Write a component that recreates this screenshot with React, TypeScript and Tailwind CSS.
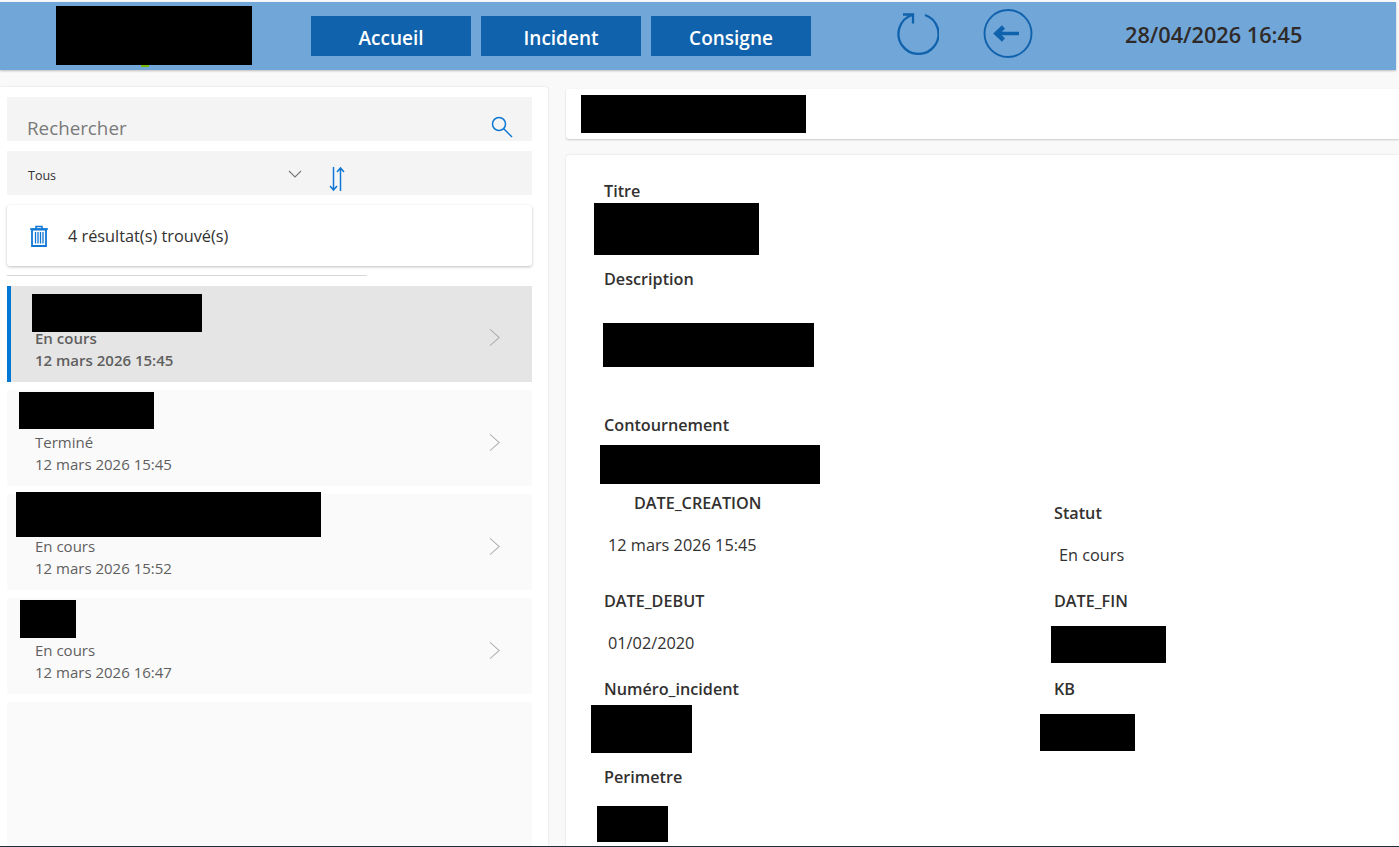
const font = "font-['Open_Sans',sans-serif]";

const Redacted = ({className}: {className: string}) => (
  <div className={`bg-black ${className}`} />
);

const NavButton = ({label}: {label: string}) => (
  <button className="w-40 h-10 bg-[#1062ac] text-white text-[19px] font-semibold flex items-center justify-center pt-1">
    {label}
  </button>
);

const Chevron = ({className}: {className: string}) => (
  <svg viewBox="0 0 12 20" className={className} fill="none" stroke="#a6a6a6" strokeWidth="1.1">
    <path d="M1 1l10 9-10 9" />
  </svg>
);

const rows = [
  {status: 'Terminé', date: '12 mars 2026 15:45', redact: 'w-[135px] h-[37px] -ml-[16px] mt-[2px] mb-[2px]'},
  {status: 'En cours', date: '12 mars 2026 15:52', redact: 'w-[305px] h-[45px] -ml-[19px] -mt-[2px] -mb-[2px]'},
  {status: 'En cours', date: '12 mars 2026 16:47', redact: 'w-[56px] h-[38px] -ml-[15px] mt-[2px] mb-[1px]'},
];

const Label = ({children, className = ''}: {children: string; className?: string}) => (
  <div className={`text-[16.2px] leading-[22px] font-semibold text-[#323130] ${className}`}>{children}</div>
);

const Value = ({children, className = ''}: {children: string; className?: string}) => (
  <div className={`text-[16.3px] leading-[22px] text-[#323130] ${className}`}>{children}</div>
);

export default function App() {
  return (
    <div className={`${font} relative w-[1399px] h-[847px] overflow-hidden bg-[#f9f9f9] flex flex-col`}>
      <header className="mt-[2px] w-[1396px] h-[68px] shrink-0 bg-[#70a6d8] shadow-[0_1px_2px_rgba(0,0,0,0.25)] flex items-start">
        <div className="relative ml-[56px] mt-[4px] w-[196px] h-[59px] bg-black">
          <span className="absolute left-[85px] top-[59px] w-[8px] h-[2px] bg-[#7ab800]" />
        </div>
        <nav className="ml-[59px] mt-[14px] flex gap-[10px]">
          <NavButton label="Accueil" />
          <NavButton label="Incident" />
          <NavButton label="Consigne" />
        </nav>
        <svg viewBox="0 0 42 42" className="ml-[86px] mt-[11px] w-[42px] h-[42px]" fill="none" stroke="#1062ac" strokeWidth="2.300">
          <path d="M28 2A20 20 0 1 1 15 2" />
          <path d="M6 1.500h10v9" />
        </svg>
        <svg viewBox="0 0 50 49" className="ml-[44px] mt-[7px] w-[50px] h-[49px]" fill="none" stroke="#1062ac" strokeWidth="1.900">
          <circle cx="25" cy="24.500" r="23.500" />
          <path d="M16 24.500h20" strokeWidth="3.500" />
          <path d="M20.500 18l-7 6.500 7 6.500" strokeWidth="4.500" />
        </svg>
        <div className="ml-[92px] mt-[19px] text-[21.700px] leading-[28px] font-semibold text-[#2f2a28]">28/04/2026 16:45</div>
      </header>

      <main className="flex-1 min-h-0 flex">
        <aside className="mt-[17px] w-[548px] bg-white rounded-tr-[3px] shadow-[0_0_2px_rgba(0,0,0,0.15)] pl-[7px] pr-[16px] pt-[10px] flex flex-col">
          <div className="h-[44px] bg-[#f4f4f4] flex items-end justify-between pl-[20px] pr-[19px]">
            <span className="text-[18.800px] leading-[26px] text-[#7a7a7a]">Rechercher</span>
            <svg viewBox="0 0 22 22" className="w-[22px] h-[22px] mb-[3px]" fill="none" stroke="#0f78d4" strokeWidth="1.500">
              <circle cx="8" cy="8" r="6.500" />
              <path d="M12.500 12.500l8.500 8.500" />
            </svg>
          </div>
          <div className="mt-[10px] h-[44px] bg-[#f4f4f4] flex items-center pl-[21px]">
            <span className="w-[260px] pt-[6px] text-[12.500px] text-[#323130]">Tous</span>
            <svg viewBox="0 0 14 8" className="w-[14px] h-[8px] mt-[1px]" fill="none" stroke="#777" strokeWidth="1.100">
              <path d="M1 1l6 6 6-6" />
            </svg>
            <svg viewBox="0 0 16 26" className="ml-[27px] mt-[11px] w-[16px] h-[26px]" fill="none" stroke="#0f78d4" strokeWidth="1.500">
              <path d="M4.500 1v23M1 20l3.500 4 3.500-4M11.500 25V2M8 6l3.500-4 3.500 4" />
            </svg>
          </div>
          <div className="mt-[10px] h-[61px] bg-white rounded-[3px] shadow-[0_1px_3px_rgba(0,0,0,0.25)] flex items-center pl-[23px]">
            <svg viewBox="0 0 18 22" className="w-[18px] h-[22px]" fill="none" stroke="#0f78d4" strokeWidth="1.300">
              <path d="M0 4h18M6 4V1.500h6V4" strokeWidth="1.600" />
              <path d="M2 4.500h14v16.500H2z" strokeWidth="1.800" />
              <path d="M5.500 7v11.500M8 7v11.500M10.500 7v11.500M13 7v11.500" />
            </svg>
            <span className="ml-[20px] pt-[2px] text-[16.300px] text-[#323130]">4 résultat(s) trouvé(s)</span>
          </div>
          <div className="mt-[9px] w-[360px] h-px bg-[#d8d8d8]" />

          <div className="mt-[10px] h-[96px] bg-[#e5e5e5] border-l-[4px] border-[#0078d4] flex justify-between pr-[32px]">
            <div className="pl-[24px] font-semibold text-[#5f5f5f]">
              <Redacted className="w-[170px] h-[38px] -ml-[3px] mt-[8px]" />
              <div className="text-[15px] leading-[22px] -mt-[5px]">En cours</div>
              <div className="text-[15px] leading-[22px]">12 mars 2026 15:45</div>
            </div>
            <Chevron className="mt-[42px] w-[11px] h-[19px]" />
          </div>

          {rows.map((row) => (
            <div key={row.date} className="mt-[8px] h-[96px] bg-[#fafafa] flex justify-between pl-[28px] pr-[32px]">
              <div className="text-[#5f5f5f] text-[15px] leading-[22px]">
                <Redacted className={row.redact} />
                <div>{row.status}</div>
                <div>{row.date}</div>
              </div>
              <Chevron className="mt-[43px] w-[11px] h-[19px]" />
            </div>
          ))}

          <div className="mt-[8px] flex-1 bg-[#fafafa]" />
        </aside>

        <section className="ml-[18px] mt-[19px] flex-1 min-w-0 flex flex-col">
          <div className="h-[50px] bg-white rounded-l-[3px] shadow-[0_1px_2px_rgba(0,0,0,0.2)] pl-[15px] pt-[6px]">
            <Redacted className="w-[225px] h-[38px]" />
          </div>
          <div className="mt-[16px] flex-1 bg-white rounded-tl-[3px] shadow-[0_0_2px_rgba(0,0,0,0.15)] pt-[25px]">
            <Label className="ml-[38px]">Titre</Label>
            <Redacted className="ml-[28px] mt-px w-[165px] h-[52px]" />
            <Label className="ml-[38px] mt-[13px]">Description</Label>
            <Redacted className="ml-[37px] mt-[33px] w-[211px] h-[44px]" />
            <Label className="ml-[38px] mt-[47px]">Contournement</Label>
            <Redacted className="ml-[34px] mt-[9px] w-[220px] h-[39px]" />

            <div className="grid grid-cols-[488px_1fr] grid-rows-[106px_88px_88px_80px]">
              <div className="pt-[8px]">
                <Label className="ml-[68px]">DATE_CREATION</Label>
                <Value className="ml-[42px] mt-[20px]">12 mars 2026 15:45</Value>
              </div>
              <div className="pt-[18px]">
                <Label>Statut</Label>
                <Value className="ml-[5px] mt-[20px]">En cours</Value>
              </div>
              <div>
                <Label className="ml-[38px]">DATE_DEBUT</Label>
                <Value className="ml-[42px] mt-[20px]">01/02/2020</Value>
              </div>
              <div>
                <Label>DATE_FIN</Label>
                <Redacted className="-ml-[3px] mt-[14px] w-[115px] h-[37px]" />
              </div>
              <div>
                <Label className="ml-[38px]">Numéro_incident</Label>
                <Redacted className="ml-[25px] mt-[5px] w-[101px] h-[48px]" />
              </div>
              <div>
                <Label>KB</Label>
                <Redacted className="-ml-[14px] mt-[14px] w-[95px] h-[37px]" />
              </div>
              <div className="col-span-2">
                <Label className="ml-[38px]">Perimetre</Label>
                <Redacted className="ml-[31px] mt-[18px] w-[71px] h-[36px]" />
              </div>
            </div>
          </div>
        </section>
      </main>
      <div className="h-px shrink-0 bg-[#1f2d3d]" />
    </div>
  );
}
